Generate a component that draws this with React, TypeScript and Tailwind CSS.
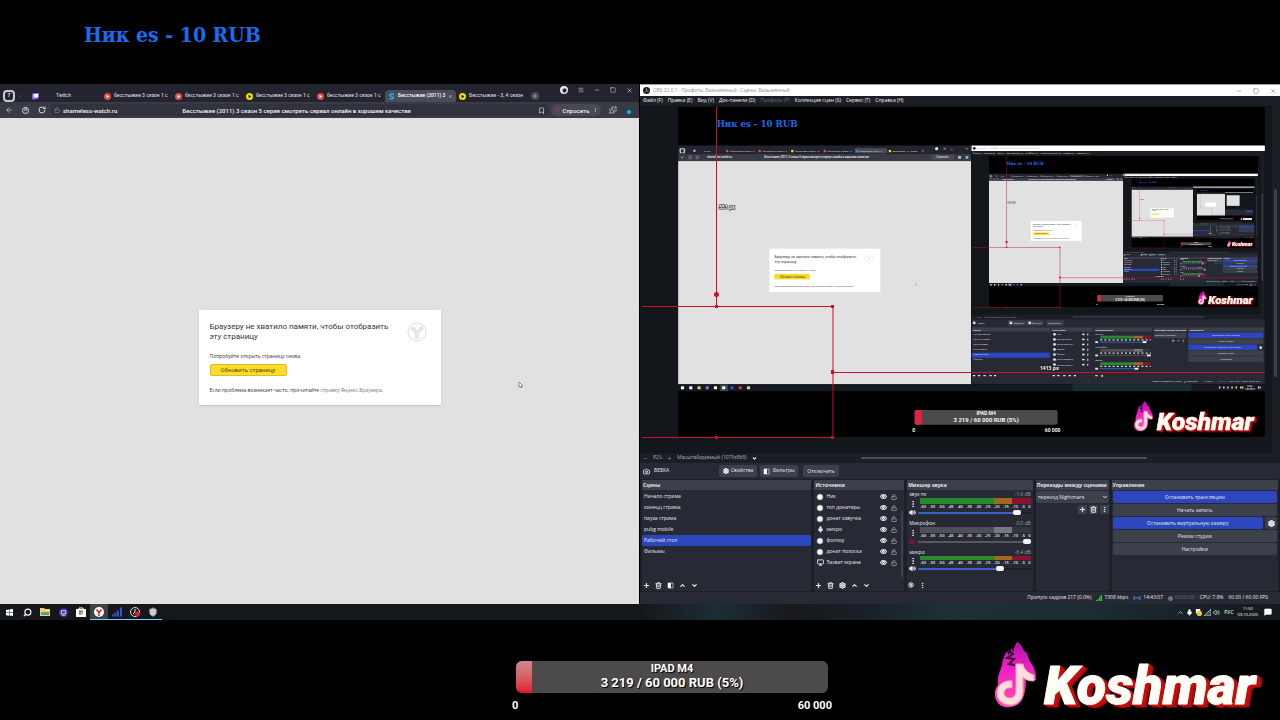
import React from 'react'

import {
    ArrowLeft,
    Bookmark,
    Camera,
    ChevronDown,
    ChevronUp,
    Clock3,
    EllipsisVertical,
    Eye,
    LockOpen,
    Menu,
    MessageSquare,
    Mic,
    Minus,
    Monitor,
    Plus,
    Puzzle,
    RotateCw,
    Search,
    Settings,
    Shield,
    Square,
    Trash2,
    Volume2,
    VolumeX,
    X,
} from 'lucide-react'

const TABS = [
    { title: 'бесстыжие 3 сезон 1 с', color: '#e5484d' },
    { title: 'бесстыжие 3 сезон 1 с', color: '#e5484d' },
    { title: 'бесстыжие 3 сезон 1 с', color: '#f5d90a' },
    { title: 'бесстыжие 3 сезон 1 с', color: '#e5484d' },
    { title: 'Бесстыжие (2011) 3', color: '#16a3c4', active: true },
    { title: 'Бесстыжие - 3, 4 сезон', color: '#f5d90a' },
]

const MENU = [
    'Файл (F)',
    'Правка (E)',
    'Вид (V)',
    'Док-панели (D)',
    'Профиль (P)',
    'Коллекция сцен (S)',
    'Сервис (T)',
    'Справка (H)',
]

const SCENES = [
    'Начало стрима',
    'конецц стрима',
    'пауза стрима',
    'pubg mobile',
    'Рабочий стол',
    'Фильмы',
]

const SOURCES = [
    { name: 'Ник', type: 'web' },
    { name: 'топ донатеры', type: 'web' },
    { name: 'донат озвучка', type: 'web' },
    { name: 'микро', type: 'mic' },
    { name: 'фоллоу', type: 'web' },
    { name: 'донат полоска', type: 'web' },
    { name: 'Захват экрана', type: 'screen' },
]

const CHANNELS = [
    { name: 'звук пк', db: '-1.6 dB', value: 91, muted: false, thin: false },
    { name: 'Микрофон', db: '0.0 dB', value: 100, muted: true, thin: false },
    { name: 'микро', db: '-6.4 dB', value: 74, muted: false, thin: true },
]

const MARKS = [60, 55, 50, 45, 40, 35, 30, 25, 20, 15, 10, 5, 0]

const CONTROLS = [
    { label: 'Остановить трансляцию', on: true, gear: false },
    { label: 'Начать запись', on: false, gear: false },
    { label: 'Остановить виртуальную камеру', on: true, gear: true },
    { label: 'Режим студии', on: false, gear: false },
    { label: 'Настройки', on: false, gear: false },
]

const SANS = 'Open Sans, Noto Sans, sans-serif'
const ROBOTO = 'Roboto, sans-serif'
const SLAB = 'DejaVu Serif Condensed, DejaVu Serif, serif'

/* ---------- logo ---------- */

function Flame() {
    return (
        <g>
            <defs>
                <linearGradient id="flame" x1="0" y1="0" x2="0" y2="1">
                    <stop offset="0" stopColor="#b512a8" />
                    <stop offset="0.4" stopColor="#ee1fc6" />
                    <stop offset="1" stopColor="#ff4fae" />
                </linearGradient>
            </defs>
            <path
                d="M1017 642c4 2 5 5 7 9l3 2c1 4 2 7 4 10 3 4 5 8 5 17-3 1-7 0-10-3 0 9-1 18-4 23-5 8-16 9-22 5-6-5-7-14-2-20-1-9 2-13 4-20 1-7 2-9 5-14l2 5c0-3 1-5 3-8l1 4c1-4 2-7 4-10z"
                fill="url(#flame)"
            />
            <path
                d="M1008 650l5 4-6 4 7 1-5 5 6 1"
                fill="none"
                stroke="#3a0438"
                strokeWidth="2"
            />
            <path
                d="M1016 664h7c1 6 5 9 11 11v6c-5 0-8-1-11-4v14c0 9-6 14-13 14s-13-5-13-12c0-8 7-13 15-12v7c-4-1-8 1-8 5 0 3 3 5 6 5 4 0 6-3 6-8z"
                fill="#ffdfd8"
                stroke="#ff9fc4"
                strokeWidth="1"
            />
        </g>
    )
}

function Logo() {
    return (
        <g>
            <Flame />
            <text
                x="1044"
                y="704"
                fill="#fffdf6"
                stroke="#fffdf6"
                strokeWidth="1"
                strokeLinejoin="round"
                fontFamily={ROBOTO}
                fontSize="54"
                fontWeight="900"
                fontStyle="italic"
                className="[filter:drop-shadow(1px_1px_0_#c40d0d)_drop-shadow(2px_1px_0_#c40d0d)_drop-shadow(2px_1px_0_#a80b0b)]"
            >
                Koshmar
            </text>
        </g>
    )
}

/* ---------- stream seen inside the preview ---------- */

function MiniBrowser() {
    return (
        <g fontFamily={ROBOTO}>
            <rect x="0" y="84" width="639" height="18" fill="#23242e" />
            <rect x="0" y="102" width="639" height="16" fill="#383a46" />
            <rect x="3" y="90" width="12" height="11" rx="2" fill="#c9cad0" />
            <rect x="6" y="92" width="6" height="7" rx="1" fill="#23242e" />
            <rect x="33" y="93" width="5" height="5" fill="#b79cf5" />
            <text x="56" y="98" fontSize="5" fill="#c4c5cb">
                Twitch
            </text>
            {TABS.map((tab, i) => (
                <g key={i}>
                    {tab.active && (
                        <rect
                            x={101 + i * 71}
                            y="90"
                            width="71"
                            height="11"
                            rx="2"
                            fill="#4a4d59"
                        />
                    )}
                    <circle cx={107 + i * 71} cy="96" r="3" fill={tab.color} />
                    <text
                        x={113 + i * 71}
                        y="98"
                        fontSize="5"
                        fontWeight="500"
                        fill="#d2d3d8"
                    >
                        {tab.title}
                    </text>
                </g>
            ))}
            <circle cx="534" cy="96" r="3" fill="#565863" />
            <circle cx="564" cy="91" r="3.5" fill="#e4e4e8" />
            <path
                d="M579 90h5M579 92h5M595 93h4M628 89l4 4M632 89l-4 4M7 110h5M7 110l2-2M7 110l2 2"
                stroke="#d8d8dc"
                fill="none"
            />
            <circle cx="26" cy="110" r="3" fill="none" stroke="#c4c5cb" />
            <circle cx="42" cy="110" r="3" fill="none" stroke="#c4c5cb" />
            <text x="63" y="112" fontSize="6" fontWeight="500" fill="#f0f0f2">
                shameless-watch.ru
            </text>
            <text x="188" y="112" fontSize="6" fontWeight="500" fill="#f0f0f2">
                Бесстыжие (2011) 3 сезон 5 серия смотреть сериал онлайн в
                хорошем качестве
            </text>
            <rect x="552" y="104" width="50" height="11" rx="3" fill="#474a55" />
            <text x="563" y="112" fontSize="6" fill="#f0f0f2">
                Спросить
            </text>
            <rect x="611" y="107" width="6" height="6" fill="#c4c5cb" />
            <rect x="627" y="107" width="6" height="6" fill="#7bb6e6" />
            <rect x="0" y="118" width="639" height="487" fill="#e1e1e1" />
            <rect x="199" y="309" width="242" height="95" fill="#fff" />
            <g fill="#333">
                <text x="210" y="329" fontSize="8">
                    Браузеру не хватило памяти, чтобы отобразить
                </text>
                <text x="210" y="340" fontSize="8">
                    эту страницу
                </text>
                <g fontFamily={SANS} fontSize="5">
                    <text x="210" y="358">
                        Попробуйте открыть страницу снова.
                    </text>
                    <text x="210" y="393">
                        Если проблема возникает часто, прочитайте справку
                        Яндекс.Браузера.
                    </text>
                </g>
            </g>
            <rect x="210" y="364" width="77" height="12" fill="#f8d926" />
            <text x="222" y="372" fontSize="6" fill="#55490a">
                Обновить страницу
            </text>
            <circle cx="416" cy="330" r="9" fill="none" stroke="#ddd" />
            <path
                d="M411 326l5 4 5-4M416 330v6"
                fill="none"
                stroke="#ddd"
                strokeWidth="2"
            />
            <path d="M518 384v5l2-1" stroke="#777" fill="none" />
        </g>
    )
}

function MiniObs({ depth }: { depth: number }) {
    return (
        <g fontFamily={SANS} fill="#e2e3e8" fontSize="5">
            <rect x="640" y="84" width="640" height="12" fill="#fff" />
            <rect x="640" y="96" width="640" height="368" fill="#1b1e24" />
            <circle cx="646" cy="90" r="3" fill="#222" />
            <text x="651" y="92" fill="#aaa" fontFamily={ROBOTO}>
                OBS 32.0.1 - Профиль: Безымянный - Сцены: Безымянный
            </text>
            {MENU.map((item, i) => (
                <text
                    key={item}
                    x={[643, 667, 696, 717, 757, 791, 840, 869][i]}
                    y="103"
                >
                    {item}
                </text>
            ))}
            <svg
                x="640"
                y="105"
                width="632"
                height="348"
                viewBox="640 105 632 348"
            >
                <Preview depth={depth - 1} />
            </svg>
            <rect x="1273" y="189" width="3" height="190" fill="#3c404b" />
            <rect x="861" y="457" width="286" height="2" fill="#4a4e5a" />
            <text x="652" y="460" fill="#9a9ca6">
                82% + Масштабируемый (1079x868)
            </text>
            <rect x="640" y="463" width="640" height="142" fill="#272a34" />
            <circle cx="646" cy="471" r="3" />
            <text x="654" y="473">ВЕБКА</text>
            {['Свойства', 'Фильтры', 'Отключить'].map((label, i) => (
                <g key={label}>
                    <rect
                        x={[719, 759, 803][i]}
                        y="465"
                        width="38"
                        height="12"
                        rx="2"
                        fill="#3c404b"
                    />
                    {i < 2 && (
                        <circle cx={[726, 767][i]} cy="471" r="3" />
                    )}
                    <text x={[731, 771, 808][i]} y="473">
                        {label}
                    </text>
                </g>
            ))}
            {[
                [641, 170, 'Сцены'],
                [814, 91, 'Источники'],
                [908, 126, 'Микшер звука'],
                [1037, 73, 'Переходы между сценами'],
                [1113, 166, 'Управление'],
            ].map(([x, w, title]) => (
                <g key={title}>
                    <rect x={x} y="481" width={w} height="9" fill="#3c404b" />
                    <text x={Number(x) + 2} y="488" fontWeight="700">
                        {title}
                    </text>
                </g>
            ))}
            <rect x="641" y="536" width="170" height="11" fill="#2c47bd" />
            {SCENES.map((scene, i) => (
                <text key={scene} x="644" y={498 + i * 11}>
                    {scene}
                </text>
            ))}
            {SOURCES.map((source, i) => (
                <g key={source.name}>
                    <circle cx="821" cy={496 + i * 11} r="3" />
                    <text x="826" y={498 + i * 11}>
                        {source.name}
                    </text>
                    <ellipse cx="884" cy={496 + i * 11} rx="3" ry="2" />
                    <rect
                        x="892"
                        y={494 + i * 11}
                        width="3"
                        height="5"
                        fill="#a0a2aa"
                    />
                </g>
            ))}
            {CHANNELS.map((channel, i) => {
                const y = 495 + i * 29
                const end = 923 + channel.value * 1.04
                return (
                    <g key={channel.name}>
                        <text x="910" y={y + 2}>
                            {channel.name}
                        </text>
                        <rect
                            x="921"
                            y={y + 4}
                            width="73"
                            height="6"
                            fill={channel.muted ? '#4f5057' : '#278a2b'}
                        />
                        <rect
                            x="994"
                            y={y + 4}
                            width="20"
                            height="6"
                            fill={channel.muted ? '#77787d' : '#a06a1e'}
                        />
                        <rect
                            x="1014"
                            y={y + 4}
                            width="17"
                            height="6"
                            fill={channel.muted ? '#33363f' : '#8a1430'}
                        />
                        <path
                            d={`M921 ${y + 13}h110`}
                            stroke="#e2e3e8"
                            strokeWidth="3"
                            strokeDasharray="4 5"
                        />
                        <path
                            d={`M919 ${y + 18}H${end}`}
                            stroke={channel.muted ? '#555' : '#3c63c9'}
                            strokeWidth="2"
                        />
                        <rect
                            x={end - 4}
                            y={y + 16}
                            width="8"
                            height="4"
                            fill="#fff"
                        />
                        <rect x="910" y={y + 16} width="6" height="4" />
                    </g>
                )
            })}
            <rect x="1038" y="492" width="70" height="12" fill="#3c404b" />
            <text x="1040" y="500">
                переход Nightmare
            </text>
            <path d="M1077 510h6M1080 507v6M1089 510h5M1102 507v6" stroke="#fff" />
            {CONTROLS.map((control, i) => (
                <g key={control.label}>
                    <rect
                        x="1113"
                        y={492 + i * 13}
                        width={control.gear ? 150 : 164}
                        height="12"
                        fill={control.on ? '#2c47bd' : '#3c404b'}
                    />
                    <text
                        x={control.gear ? 1188 : 1195}
                        y={500 + i * 13}
                        textAnchor="middle"
                    >
                        {control.label}
                    </text>
                </g>
            ))}
            <circle cx="1271" cy="525" r="3" />
            <path
                d="M643 586h5M654 586h5M666 586h5M679 586h5M689 586h5M817 586h5M827 586h5M840 586h5M852 586h5M863 586h5M910 586h5M925 584v5"
                stroke="#e2e3e8"
                strokeWidth="3"
            />
            <text x="1035" y="601">
                Пропуск кадров 217 (0.0%)
            </text>
            <path d="M1102 602l5-5v5z" fill="#35c235" />
            <text x="1109" y="601">
                7308 kbps
            </text>
            <text x="1146" y="601">
                14:43:07
            </text>
            <text x="1177" y="601" fill="#7b7d86">
                00:00:00
            </text>
            <text x="1202" y="601">
                CPU: 7.8%
            </text>
            <text x="1229" y="601">
                60.00 / 60.00 FPS
            </text>
        </g>
    )
}

/* the deepest copy is too small for any lettering */
function TinyStream() {
    return (
        <>
            <rect width="1280" height="720" fill="#000" />
            <rect x="84" y="27" width="175" height="16" fill="#12489e" />
            <rect x="0" y="84" width="640" height="34" fill="#30323e" />
            <rect x="0" y="118" width="640" height="487" fill="#e1e1e1" />
            <rect x="199" y="309" width="242" height="95" fill="#fff" />
            <rect x="640" y="84" width="640" height="12" fill="#fff" />
            <rect x="640" y="96" width="640" height="367" fill="#13161a" />
            <rect x="678" y="146" width="294" height="240" fill="#e1e1e1" />
            <rect x="640" y="463" width="640" height="142" fill="#272a34" />
            <rect x="1113" y="492" width="164" height="38" fill="#2c47bd" />
            <rect x="516" y="661" width="312" height="32" fill="#4c4a4b" />
            <path d="M1050 664h206l-8 40h-206z" fill="#f3dcd8" />
            <Flame />
        </>
    )
}

function Stream({ depth }: { depth: number }) {
    return (
        <>
            <rect width="1280" height="720" fill="#000" />
            <text
                x="84"
                y="43"
                fontFamily={SLAB}
                fontSize="21"
                fontWeight="700"
                fill="#1a6cf0"
            >
                Ник es - 10 RUB
            </text>
            <MiniBrowser />
            <MiniObs depth={depth} />
            <rect x="0" y="605" width="1280" height="15" fill="#151a1e" />
            <rect x="860" y="605" width="260" height="15" fill="#1c2c33" />
            <rect x="91" y="605" width="18" height="15" fill="#3d4248" />
            {[
                '#fff',
                '#fff',
                '#e3cf6a',
                '#8d6ae0',
                '#fff',
                '#fff',
                '#3550d0',
                '#c93a4a',
                '#c9ccd0',
            ].map((color, i) => (
                <rect
                    key={i}
                    x={6 + i * 18}
                    y="609"
                    width="7"
                    height="7"
                    rx="2"
                    fill={color}
                />
            ))}
            <path
                d="M1180 612h4M1189 612h4M1198 612h4M1207 612h4M1216 612h4M1226 612h8M1265 612h6"
                stroke="#dfe1e4"
                strokeWidth="4"
                strokeDasharray="3 1"
            />
            <path
                d="M1242 609h11M1238 615h20"
                stroke="#dfe1e4"
                strokeWidth="3"
                strokeDasharray="2 1"
            />
            <rect
                x="516"
                y="661"
                width="312"
                height="32"
                rx="5"
                fill="#4c4a4b"
            />
            <rect x="516" y="661" width="16" height="32" rx="4" fill="#dc2742" />
            <g
                fontFamily={ROBOTO}
                fontWeight="700"
                fill="#f4f4f4"
                textAnchor="middle"
                fontSize="11"
            >
                <text x="672" y="673">
                    IPAD M4
                </text>
                <text x="672" y="688" fontSize="13">
                    3 219 / 60 000 RUB (5%)
                </text>
                <text x="514" y="710">
                    0
                </text>
                <text x="817" y="710">
                    60 000
                </text>
            </g>
            <Logo />
        </>
    )
}

function Preview({ depth }: { depth: number }) {
    return (
        <>
            <rect x="640" y="105" width="632" height="348" fill="#13161a" />
            <svg
                x="678"
                y="107"
                width="587"
                height="330"
                viewBox="0 0 1280 720"
            >
                {depth > 0 ? <Stream depth={depth} /> : <TinyStream />}
            </svg>
            <path
                d="M716.5 107V306M642 306.5H833V437.5H642M833 372.5H1265"
                stroke="#c8102e"
                fill="none"
            />
            <g fill="#c8102e">
                <circle cx="716.5" cy="294.5" r="2.5" />
                <rect x="715" y="305" width="3" height="3" />
                <rect x="831" y="305" width="3" height="3" />
                <rect x="831" y="370" width="3" height="4" />
                <rect x="715" y="436" width="3" height="3" />
                <rect x="831" y="436" width="3" height="3" />
            </g>
            <g
                fontFamily={SANS}
                fontWeight="700"
                fontSize="5"
                fill="#fff"
                stroke="#111"
                strokeWidth="1"
                paintOrder="stroke"
            >
                <text x="719" y="209">
                    553 px
                </text>
                <text x="1040" y="370">
                    1413 px
                </text>
            </g>
        </>
    )
}

/* ---------- browser window ---------- */

function Browser() {
    return (
        <section className="mr-px flex min-w-0 flex-col bg-[#e1e1e1] font-['Roboto',sans-serif]">
            <div className="flex h-[18px] items-end bg-[#23242e] text-[5px] font-medium text-[#d2d3d8]">
                <div className="flex h-3 w-[101px] items-center pl-[3px]">
                    <button
                        aria-label="Вкладки"
                        className="flex h-3 w-3 items-center justify-center rounded-sm bg-[#c9cad0]"
                    >
                        <span className="flex h-2 w-2 items-center justify-center rounded-xs bg-[#23242e] text-white">
                            7
                        </span>
                    </button>
                    <ChevronDown size={5} className="ml-[3px] text-gray-500" />
                    <svg viewBox="0 0 8 8" className="ml-[9px] size-[7px]">
                        <path d="M1 0h7v5L6 7H4L2 8V7H0V2z" fill="#8b5cf6" />
                        <path d="M2 1h5v3L6 5H2z" fill="#fff" />
                    </svg>
                    <span className="ml-[17px]">Twitch</span>
                </div>
                {TABS.map((tab, i) => (
                    <div
                        key={i}
                        className={
                            tab.active
                                ? 'flex h-3 w-[71px] shrink-0 items-center gap-[3px] rounded-t-sm bg-[#4a4d59] px-[3px] text-white'
                                : 'flex h-3 w-[71px] shrink-0 items-center gap-[3px] px-[3px]'
                        }
                    >
                        <svg viewBox="0 0 8 8" className="size-[7px] shrink-0">
                            {tab.active ? (
                                <path
                                    d="M6.500 2C5 0.500 2 0.800 2 2.500S6 4 6 5.500 3 7.500 1.500 6"
                                    fill="none"
                                    stroke="#19b5d8"
                                    strokeWidth="1.800"
                                />
                            ) : (
                                <>
                                    <circle cx="4" cy="4" r="4" fill={tab.color} />
                                    <path
                                        d="M3 2l3 2-3 2z"
                                        fill={
                                            tab.color === '#f5d90a'
                                                ? '#111'
                                                : '#fff'
                                        }
                                    />
                                </>
                            )}
                        </svg>
                        <span className="flex-1 whitespace-nowrap">
                            {tab.title}
                        </span>
                        {tab.active && <X size={5} />}
                    </div>
                ))}
                <button
                    aria-label="Новая вкладка"
                    className="mb-[2px] ml-1 flex size-2 items-center justify-center rounded-full bg-[#4a4d59]"
                >
                    <Plus size={6} />
                </button>
                <div className="mb-2 ml-auto flex items-center gap-[10px] pr-[6px] text-gray-200">
                    <span className="flex size-2 items-center justify-center rounded-full bg-gray-200">
                        <Shield size={5} fill="#23242e" color="#23242e" />
                    </span>
                    <Menu size={6} />
                    <Minus size={6} />
                    <Square size={6} />
                    <X size={7} />
                </div>
            </div>
            <div className="flex h-4 items-center bg-[#383a46] text-[6px] font-medium text-gray-100">
                <div className="flex w-[51px] items-center gap-[9px] pl-[5px] text-gray-300">
                    <ArrowLeft size={8} />
                    <span className="flex size-[7px] items-center justify-center rounded-full border border-gray-300 text-[5px]">
                        Я
                    </span>
                    <RotateCw size={8} strokeWidth={3} />
                </div>
                <div className="flex h-3 flex-1 items-center rounded-sm bg-[#30323e] px-[3px]">
                    <LockOpen size={6} className="text-gray-400" />
                    <span className="ml-[3px]">shameless-watch.ru</span>
                    <span className="flex-1 text-center whitespace-nowrap">
                        Бесстыжие (2011) 3 сезон 5 серия смотреть сериал
                        онлайн в хорошем качестве
                    </span>
                    <span className="w-[62px]" />
                    <Bookmark size={7} />
                </div>
                <button className="ml-[3px] flex h-3 w-[50px] items-center gap-[3px] rounded-md bg-[#474a55] px-1">
                    <MessageSquare size={6} className="text-pink-500" />
                    Спросить
                    <EllipsisVertical size={6} className="ml-auto" />
                </button>
                <div className="flex w-[38px] items-center justify-between px-2">
                    <Puzzle size={8} />
                    <span className="mt-1 size-1 rounded-full bg-sky-400" />
                </div>
            </div>
            <div className="flex flex-1 items-center justify-center pb-2">
                <div className="flex h-[95px] w-[242px] justify-between bg-white px-[11px] pt-3 text-[#333] shadow-sm">
                    <div>
                        <h1 className="w-[190px] text-[8px] leading-[10px]">
                            Браузеру не хватило памяти, чтобы отобразить эту
                            страницу
                        </h1>
                        <p className="mt-[10px] font-['Open_Sans',sans-serif] text-[5px] leading-2">
                            Попробуйте открыть страницу снова.
                        </p>
                        <button className="mt-1 block h-3 w-[77px] rounded-xs border border-[#e0bd20] bg-[#fbdc2b] text-[6px] leading-none text-[#55490a]">
                            Обновить страницу
                        </button>
                        <p className="mt-[10px] font-['Open_Sans',sans-serif] text-[5px] leading-2 whitespace-nowrap">
                            Если проблема возникает часто, прочитайте{' '}
                            <a href="#help" className="text-[#777]">
                                справку Яндекс.Браузера
                            </a>
                            .
                        </p>
                    </div>
                    <svg
                        viewBox="0 0 20 20"
                        className="mr-[3px] -ml-6 size-5 shrink-0"
                    >
                        <circle
                            cx="10"
                            cy="10"
                            r="9"
                            fill="#fdfdfd"
                            stroke="#dedede"
                        />
                        <path
                            d="M4.500 5.500L10 10.500L15.500 5.500M10 10.500V17"
                            fill="none"
                            stroke="#d0d0d0"
                            strokeWidth="3"
                        />
                        <path
                            d="M4.500 5.500L10 10.500L15.500 5.500M10 10.500V17"
                            fill="none"
                            stroke="#f0f0f0"
                            strokeWidth="1.500"
                        />
                    </svg>
                </div>
                {/* mouse pointer */}
                <div className="relative">
                    <svg
                        viewBox="0 0 6 8"
                        className="absolute top-6 left-[77px] h-2 w-[6px]"
                    >
                        <path
                            d="M1 1v5l1-1 1 2 1-1-1-1h2z"
                            fill="#fff"
                            stroke="#666"
                            strokeWidth="0.700"
                        />
                    </svg>
                </div>
            </div>
        </section>
    )
}

/* ---------- studio window ---------- */

function HalfSquare() {
    return (
        <svg viewBox="0 0 7 7" className="size-[7px]">
            <path d="M1 1h5v5H1z" fill="none" stroke="#a4a7b0" />
            <path d="M1 1h3v5H1z" fill="#f3f4f6" />
        </svg>
    )
}

function Dock({
    title,
    children,
    footer,
}: {
    title: string
    children: React.ReactNode
    footer?: React.ReactNode
}) {
    return (
        <div className="flex min-w-0 flex-col border border-[#1d2026] bg-[#272a34]">
            <h2 className="h-[10px] bg-[#3c404b] px-px text-[5px] leading-[10px] font-bold whitespace-nowrap">
                {title}
            </h2>
            <div className="flex-1 pt-px">{children}</div>
            {footer && (
                <div className="flex h-3 items-center gap-[5px] px-px">
                    {footer}
                </div>
            )}
        </div>
    )
}

function SourceIcon({ type }: { type: string }) {
    if (type === 'mic') return <Mic size={7} fill="currentColor" />
    if (type === 'screen') return <Monitor size={7} strokeWidth={3} />
    return <Clock3 size={8} fill="#f3f4f6" stroke="#272a34" />
}

function Channel({ channel }: { channel: (typeof CHANNELS)[number] }) {
    const fill = channel.muted ? '#555862' : '#3c63c9'
    return (
        <div className="h-[29px] px-[2px] text-[5px] leading-[7px]">
            <div className="flex justify-between">
                <span>{channel.name}</span>
                <span className="text-gray-400">{channel.db}</span>
            </div>
            <div className="flex">
                <div className="flex w-[11px] shrink-0 items-center">
                    <EllipsisVertical size={8} strokeWidth={3} />
                </div>
                <div className="flex-1">
                    <div
                        className={
                            channel.thin ? 'flex h-1' : 'flex h-[6px]'
                        }
                    >
                        <span
                            className={
                                channel.muted
                                    ? 'w-2/3 bg-[#4f5057]'
                                    : 'w-2/3 bg-[#278a2b]'
                            }
                        />
                        <span
                            className={
                                channel.muted
                                    ? 'w-1/6 bg-[#77787d]'
                                    : 'w-1/6 bg-[#a06a1e]'
                            }
                        />
                        <span
                            className={
                                channel.muted
                                    ? 'w-1/6 bg-[#33363f]'
                                    : 'w-1/6 bg-[#8a1430]'
                            }
                        />
                    </div>
                    <div className="flex justify-between text-[4px] leading-[5px] font-semibold">
                        {MARKS.map((mark) => (
                            <span key={mark}>{mark ? `-${mark}` : '0'}</span>
                        ))}
                    </div>
                </div>
            </div>
            <div className="flex items-center gap-[2px]">
                {channel.muted ? (
                    <VolumeX
                        size={7}
                        strokeWidth={3}
                        className="text-rose-700"
                    />
                ) : (
                    <Volume2 size={7} strokeWidth={3} fill="currentColor" />
                )}
                <input
                    type="range"
                    aria-label={channel.name}
                    defaultValue={channel.value}
                    className="h-[2px] min-w-0 flex-1 appearance-none rounded-full [&::-webkit-slider-thumb]:h-[5px] [&::-webkit-slider-thumb]:w-2 [&::-webkit-slider-thumb]:appearance-none [&::-webkit-slider-thumb]:rounded-xs [&::-webkit-slider-thumb]:bg-gray-100"
                    style={{
                        background: `linear-gradient(to right, ${fill} ${channel.value}%, #1b1e24 ${channel.value}%)`,
                    }}
                />
            </div>
        </div>
    )
}

function Docks() {
    return (
        <div className="grid h-[113px] grid-cols-[172fr_92fr_128fr_75fr_169fr] gap-px px-px">
            <Dock
                title="Сцены"
                footer={
                    <>
                        <Plus size={7} strokeWidth={4} />
                        <Trash2 size={7} strokeWidth={3} />
                        <HalfSquare />
                        <ChevronUp size={7} strokeWidth={4} />
                        <ChevronDown size={7} strokeWidth={4} />
                    </>
                }
            >
                <ul className="text-[5px] leading-[11px]">
                    {SCENES.map((scene) => (
                        <li
                            key={scene}
                            className={
                                scene === 'Рабочий стол'
                                    ? 'h-[11px] rounded-xs bg-[#2c47bd] px-[2px]'
                                    : 'h-[11px] px-[2px]'
                            }
                        >
                            {scene}
                        </li>
                    ))}
                </ul>
            </Dock>
            <Dock
                title="Источники"
                footer={
                    <>
                        <Plus size={7} strokeWidth={4} />
                        <Trash2 size={7} strokeWidth={3} />
                        <Settings size={7} strokeWidth={4} />
                        <ChevronUp size={7} strokeWidth={4} />
                        <ChevronDown size={7} strokeWidth={4} />
                    </>
                }
            >
                <div className="flex">
                    <ul className="flex-1 text-[5px] leading-[11px]">
                        {SOURCES.map((source) => (
                            <li
                                key={source.name}
                                className="flex h-[11px] items-center gap-[2px] pl-[2px]"
                            >
                                <span className="flex w-2 justify-center">
                                    <SourceIcon type={source.type} />
                                </span>
                                {source.name}
                                <Eye
                                    size={7}
                                    strokeWidth={4}
                                    className="ml-auto"
                                />
                                <LockOpen
                                    size={6}
                                    strokeWidth={3}
                                    className="ml-[2px] text-gray-400"
                                />
                            </li>
                        ))}
                    </ul>
                    <div className="mt-5 mr-px ml-1 h-[66px] w-[2px] bg-[#3c404b]" />
                </div>
            </Dock>
            <Dock
                title="Микшер звука"
                footer={
                    <>
                        <Settings size={6} strokeWidth={4} />
                        <EllipsisVertical size={7} strokeWidth={3} />
                    </>
                }
            >
                {CHANNELS.map((channel) => (
                    <Channel key={channel.name} channel={channel} />
                ))}
            </Dock>
            <Dock title="Переходы между сценами">
                <div className="flex items-center rounded-xs bg-[#3c404b] pr-px">
                    <select
                        aria-label="Переход"
                        className="h-3 min-w-0 flex-1 appearance-none pl-[2px] text-[5px] leading-none"
                    >
                        <option>переход Nightmare</option>
                    </select>
                    <ChevronDown size={6} strokeWidth={4} />
                </div>
                <div className="mt-[2px] flex justify-end gap-[2px]">
                    <button aria-label="Добавить" className="bg-[#3c404b] p-px">
                        <Plus size={7} strokeWidth={4} />
                    </button>
                    <button aria-label="Удалить" className="bg-[#3c404b] p-px">
                        <Trash2 size={7} strokeWidth={3} />
                    </button>
                    <button aria-label="Ещё" className="bg-[#3c404b] p-px">
                        <EllipsisVertical size={7} strokeWidth={3} />
                    </button>
                </div>
            </Dock>
            <Dock title="Управление">
                <div className="flex flex-col gap-px px-px text-[5px] leading-none">
                    {CONTROLS.map((control) => (
                        <div
                            key={control.label}
                            className="flex h-[12px] gap-[2px]"
                        >
                            <button
                                className={
                                    control.on
                                        ? 'flex-1 rounded-xs bg-[#2c47bd]'
                                        : 'flex-1 rounded-xs bg-[#3c404b]'
                                }
                            >
                                {control.label}
                            </button>
                            {control.gear && (
                                <button
                                    aria-label="Настройки камеры"
                                    className="flex w-3 items-center justify-center rounded-xs bg-[#3c404b]"
                                >
                                    <Settings size={7} strokeWidth={5} />
                                </button>
                            )}
                        </div>
                    ))}
                </div>
            </Dock>
        </div>
    )
}

function Studio() {
    return (
        <section className="flex min-w-0 flex-col bg-[#1b1e24] text-gray-200">
            <div className="flex h-3 items-center gap-[3px] border-t border-gray-400 bg-white px-[3px] font-['Roboto',sans-serif] text-[5px] text-gray-400">
                <svg viewBox="0 0 8 8" className="size-[7px]">
                    <circle cx="4" cy="4" r="4" fill="#1d1d1f" />
                    <path
                        d="M4 4V1.500M4 4L2 6M4 4L6.500 5"
                        stroke="#bbb"
                        strokeWidth="0.800"
                    />
                </svg>
                OBS 32.0.1 - Профиль: Безымянный - Сцены: Безымянный
                <div className="ml-auto flex gap-[11px] pr-px text-gray-500">
                    <Minus size={6} />
                    <Square size={6} />
                    <X size={6} />
                </div>
            </div>
            <nav className="flex h-[9px] items-center gap-[5px] px-[3px] text-[5px] leading-[9px] font-medium whitespace-nowrap text-gray-100">
                {MENU.map((item) => (
                    <a
                        key={item}
                        href="#menu"
                        className={
                            item === 'Профиль (P)' ? 'text-gray-500' : ''
                        }
                    >
                        {item}
                    </a>
                ))}
            </nav>
            <div className="flex">
                <svg viewBox="640 105 632 348" className="min-w-0 flex-1">
                    <Preview depth={3} />
                </svg>
                <div className="w-2 pt-[84px] pl-[2px]">
                    <div className="h-[188px] w-[3px] rounded-full bg-[#3c404b]" />
                </div>
            </div>
            <div className="flex h-[10px] items-center gap-[5px] px-[3px] font-['Roboto',sans-serif] text-[5px] text-gray-400">
                <Minus size={5} />
                82%
                <Plus size={5} />
                Масштабируемый (1079x868)
                <ChevronDown size={5} strokeWidth={5} className="text-white" />
                <div className="mr-[130px] ml-auto h-[2px] w-[286px] rounded-full bg-[#4a4e5a]" />
            </div>
            <div className="flex h-4 items-center gap-[3px] bg-[#272a36] px-[3px] text-[5px]">
                <div className="flex w-[73px] items-center gap-1">
                    <Camera size={7} strokeWidth={3} />
                    ВЕБКА
                </div>
                <button className="flex h-3 w-[38px] items-center justify-center gap-[2px] rounded-xs bg-[#3c404b]">
                    <Settings size={6} strokeWidth={5} />
                    Свойства
                </button>
                <button className="flex h-3 w-[38px] items-center justify-center gap-[2px] rounded-xs bg-[#3c404b]">
                    <HalfSquare />
                    Фильтры
                </button>
                <button className="ml-[2px] h-3 w-9 rounded-xs bg-[#3c404b] leading-none">
                    Отключить
                </button>
            </div>
            <Docks />
            <div className="flex h-3 items-center justify-end gap-[5px] bg-[#272a34] pr-3 text-[5px]">
                <span>Пропуск кадров 217 (0.0%)</span>
                <span className="flex items-center gap-[2px]">
                    <svg viewBox="0 0 6 6" className="size-[6px]">
                        <path
                            d="M0 5h1v1H0zM1.500 4h1v2h-1zM3 2h1v4H3zM4.500 0H6v6H4.500z"
                            fill="#35c235"
                        />
                    </svg>
                    7308 kbps
                </span>
                <span className="flex items-center gap-[2px]">
                    <svg viewBox="0 0 8 6" className="h-[6px] w-2">
                        <path
                            d="M1.500 1Q0 3 1.500 5M6.500 1Q8 3 6.500 5M3 2v2M5 2v2"
                            fill="none"
                            stroke="#4d8fd6"
                        />
                    </svg>
                    14:43:07
                </span>
                <span className="flex items-center gap-[2px] text-gray-500">
                    <span className="size-[5px] rounded-full bg-gray-500" />
                    00:00:00
                </span>
                <span>CPU: 7.8%</span>
                <span>60.00 / 60.00 FPS</span>
            </div>
        </section>
    )
}

/* ---------- taskbar ---------- */

function Taskbar() {
    return (
        <footer className="flex h-4 items-center bg-[linear-gradient(90deg,#14181b_0%,#14181b_50%,#1c2d36_56%,#17191c_62%,#192229_68%,#1d3036_74%,#1b2c33_85%,#14191d_100%)] text-white">
            <div className="flex h-4 [&>span]:flex [&>span]:w-[18px] [&>span]:items-center [&>span]:justify-center">
                <span>
                    <svg viewBox="0 0 8 8" className="size-[7px]">
                        <path
                            d="M0 1l3.500-.5v3.300H0zM4 .4L8 0v3.800H4zM0 4.300h3.500v3.300L0 7zM4 4.300h4V8l-4-.5z"
                            fill="#fff"
                        />
                    </svg>
                </span>
                <span>
                    <Search size={9} strokeWidth={3} className="-scale-x-100" />
                </span>
                <span>
                    <svg viewBox="0 0 10 8" className="h-2 w-[10px]">
                        <path d="M0 0h4l1 1h5v7H0z" fill="#f3d36b" />
                        <path d="M1 4h8v3H1z" fill="#4aa3a0" />
                    </svg>
                </span>
                <span>
                    <svg viewBox="0 0 10 10" className="size-[9px]">
                        <circle cx="5" cy="5" r="5" fill="#4b2f9e" />
                        <path
                            d="M2.500 3h5v3.500h-5zM3 8h4"
                            fill="none"
                            stroke="#e6dcff"
                        />
                    </svg>
                </span>
                <span>
                    <svg viewBox="0 0 10 10" className="size-[10px]">
                        <path d="M3 2V1h4v1" fill="none" stroke="#fff" />
                        <path d="M0 2h10v8H0z" fill="#fff" />
                        <path d="M3 3.500h2v2H3z" fill="#e5533d" />
                        <path d="M5 3.500h2v2H5z" fill="#5fae3b" />
                        <path d="M3 5.500h2v2H3z" fill="#2f8fdc" />
                        <path d="M5 5.500h2v2H5z" fill="#f2b61c" />
                    </svg>
                </span>
                <span className="border-b border-sky-300 bg-[#3d4248]">
                    <svg viewBox="0 0 10 10" className="size-[10px]">
                        <circle cx="5" cy="5" r="5" fill="#fff" />
                        <path
                            d="M2.500 2.500L5 5.500L7.500 2.500M5 5.500V9"
                            fill="none"
                            stroke="#e02020"
                            strokeWidth="1.500"
                        />
                    </svg>
                </span>
                <span className="border-b border-sky-300">
                    <svg viewBox="0 0 10 9" className="size-[10px]">
                        <path
                            d="M0 7h2v2H0zM2.500 5h2v4h-2zM5 3h2v6H5zM8 0h2v9H8z"
                            fill="#3550d8"
                        />
                    </svg>
                </span>
                <span className="border-b border-sky-300">
                    <svg viewBox="0 0 10 10" className="size-[10px]">
                        <circle
                            cx="5"
                            cy="5"
                            r="4.500"
                            fill="#1c1c1e"
                            stroke="#d8d8d8"
                        />
                        <path d="M5 5V2M5 5L3 7" stroke="#d8d8d8" />
                        <circle cx="7.500" cy="7" r="2.500" fill="#e01c2c" />
                    </svg>
                </span>
                <span className="border-b border-sky-300">
                    <Shield size={10} fill="#c9ccd0" color="#8f9296" />
                </span>
            </div>
            <div className="ml-auto flex items-center gap-[2px] pr-2 text-[4px] leading-[6px]">
                <ChevronUp size={7} />
                <Mic size={7} fill="#fff" />
                <svg viewBox="0 0 8 8" className="size-[7px]">
                    <path d="M1 0h5v5H1z" fill="#fff" />
                    <circle cx="5" cy="5" r="3" fill="#eec23a" />
                </svg>
                <svg viewBox="0 0 8 8" className="size-[7px]">
                    <path
                        d="M0 8L8 0v8z"
                        fill="#4b5157"
                        stroke="#cfd3d6"
                        strokeWidth="0.800"
                    />
                </svg>
                <Volume2 size={7} />
                <span className="px-[2px] text-[5px]">РУС</span>
                <span className="text-center">
                    11:50
                    <br />
                    09.10.2025
                </span>
                <MessageSquare size={8} fill="#fff" className="ml-1" />
            </div>
        </footer>
    )
}

export default function App() {
    return (
        <div className="min-h-screen bg-black font-['Open_Sans','Noto_Sans',sans-serif]">
            <header className="flex h-[84px] items-start px-[84px] pt-5">
                <p className="font-['DejaVu_Serif_Condensed','DejaVu_Serif',serif] text-[21px] leading-[30px] font-bold text-[#1a6cf0]">
                    Ник es - 10 RUB
                </p>
            </header>
            <main className="grid grid-cols-2">
                <Browser />
                <Studio />
            </main>
            <Taskbar />
            <div className="grid h-[100px] grid-cols-[504fr_336fr_440fr] font-['Roboto',sans-serif] font-bold text-white">
                <div />
                <div className="px-2 pt-[41px]">
                    <div className="mx-1 flex h-8 overflow-hidden rounded-md bg-[#4c4a4b]">
                        <div className="w-4 bg-linear-to-b from-[#c98a92] to-[#e0082c]" />
                        <div className="flex-1 pr-4 text-center [text-shadow:1px_1px_1px_#000]">
                            <p className="pt-px text-[11px] leading-[14px]">
                                IPAD M4
                            </p>
                            <p className="text-[13px] leading-[14px]">
                                3 219 / 60 000 RUB (5%)
                            </p>
                        </div>
                    </div>
                    <div className="mt-[6px] flex justify-between text-[11px] leading-[14px]">
                        <span>0</span>
                        <span>60 000</span>
                    </div>
                </div>
                <svg
                    viewBox="980 620 300 100"
                    className="ml-auto h-[100px] w-[300px]"
                    role="img"
                    aria-label="Koshmar"
                >
                    <Logo />
                </svg>
            </div>
        </div>
    )
}
